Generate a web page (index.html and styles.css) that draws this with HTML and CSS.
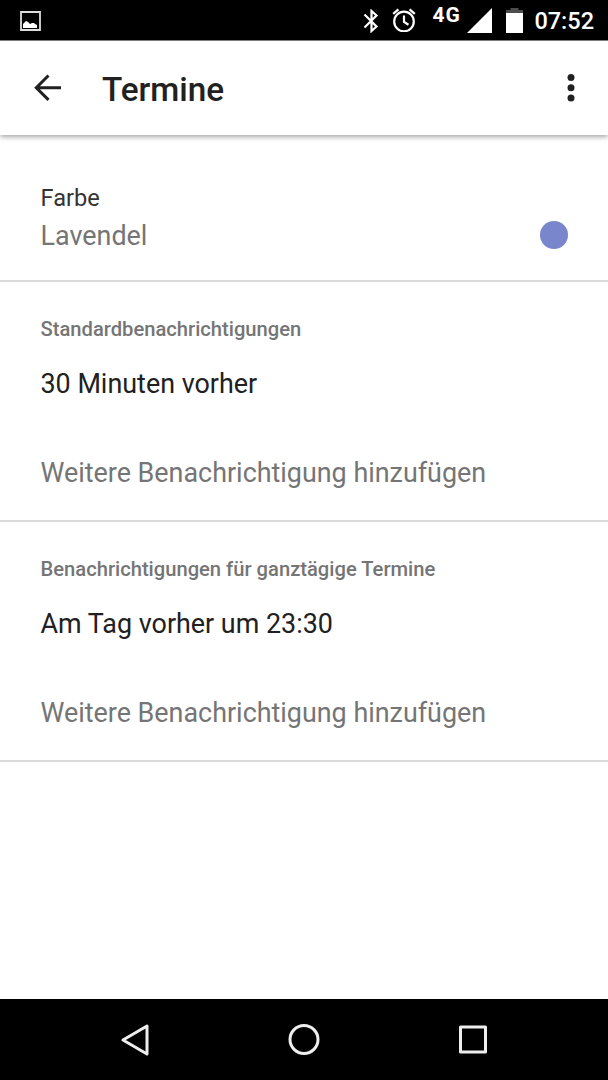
FILE: index.html
```html
<!DOCTYPE html>
<html lang="de">
<head>
<meta charset="utf-8">
<title>Termine</title>
<link rel="stylesheet" href="styles.css">
</head>
<body>
<div class="screen">
  <header class="status">
    <svg class="picture" width="21" height="20" viewBox="0 0 21 20"><path d="M1 1h19v18H1z" fill="none" stroke="#ddd" stroke-width="1.800"/><path d="M3 17v-4l2-2 1-1 2 1 2 2 2-1 2 0 1 1 2 1v3z" fill="#fff"/></svg>
    <svg class="bluetooth" width="16" height="24" viewBox="0 0 16 24"><path d="M1.500 5.500L13.500 17.500 8.500 22V2l5 4.500L1.500 18.500" fill="none" stroke="#fff" stroke-width="2.200"/></svg>
    <svg class="alarm" width="24" height="24" viewBox="0 0 24 24" fill="none" stroke="#fff" stroke-width="2.200"><circle cx="12" cy="13.500" r="9.800"/><path d="M12 7.500v6.500l4.500 2.700M1.200 5.800L6.400 1.400M22.800 5.800l-5.200-4.400"/></svg>
    <span class="network">4G</span>
    <svg class="signal" width="25" height="25" viewBox="0 0 25 25"><path d="M0 25L25 0v25z" fill="#fff"/></svg>
    <svg class="battery" width="17" height="25" viewBox="0 0 17 25"><path d="M4.500 0h8v2H17v4H0V2h4.500z" fill="#4d4d4d"/><path d="M0 5h17v20H0z" fill="#fff"/></svg>
    <span class="time">07:52</span>
  </header>
  <div class="appbar">
    <svg class="back" width="28" height="28" viewBox="0 0 28 28"><path d="M27 13.700H2.500M14.500 1.500L2.300 13.700l12.200 12.200" fill="none" stroke="#212121" stroke-width="3"/></svg>
    <h1 class="title">Termine</h1>
    <svg class="more" width="8" height="28" viewBox="0 0 8 28" fill="#212121"><circle cx="4" cy="3.500" r="3.500"/><circle cx="4" cy="13.700" r="3.500"/><circle cx="4" cy="23.900" r="3.500"/></svg>
  </div>
  <main class="content">
    <section class="color-section">
      <div class="label">Farbe</div>
      <div class="color-row"><span class="muted">Lavendel</span><span class="swatch"></span></div>
    </section>
    <section class="group">
      <h2 class="heading">Standardbenachrichtigungen</h2>
      <div class="item">30 Minuten vorher</div>
      <div class="item muted">Weitere Benachrichtigung hinzufügen</div>
    </section>
    <section class="group">
      <h2 class="heading">Benachrichtigungen für ganztägige Termine</h2>
      <div class="item">Am Tag vorher um 23:30</div>
      <div class="item muted">Weitere Benachrichtigung hinzufügen</div>
    </section>
  </main>
  <nav class="navbar">
    <svg width="34" height="34" viewBox="0 0 34 34"><path d="M29 3v28L5 17z"/></svg>
    <svg width="34" height="34" viewBox="0 0 34 34"><circle cx="17" cy="16.500" r="14"/></svg>
    <svg width="34" height="34" viewBox="0 0 34 34"><path d="M4.500 4h25v25h-25z"/></svg>
  </nav>
</div>
</body>
</html>
```
FILE: styles.css
```css
* { box-sizing: border-box; }
body { margin: 0; font-family: Roboto, sans-serif; background: #fff; color: #212121; }
.screen { width: 608px; height: 1080px; display: flex; flex-direction: column; overflow: hidden; }
svg { display: block; flex: none; }
.status { height: 41px; flex: none; background: #000; border-bottom: 1px solid #858585; color: #fff; display: flex; align-items: center; padding: 1px 14px 0 20px; }
.picture { margin-right: auto; }
.alarm { margin-left: 13px; margin-top: -1px; }
.network { width: 29px; margin: -11px 6px 0 16px; font-size: 21px; line-height: 24px; font-weight: 700; letter-spacing: 1px; }
.battery { margin: 0 11px 0 14px; }
.time { font-size: 23.500px; line-height: 28px; font-weight: 500; }
.appbar { height: 94px; flex: none; display: flex; align-items: center; padding: 0 33px 0 34px; box-shadow: 0 2px 5px rgba(0,0,0,.35); }
.title { margin: 3px auto 0 40px; font-size: 33.300px; line-height: 40px; font-weight: 500; }
.content { flex: 1; }
.color-section { height: 147px; padding: 48px 40px 0 40.500px; border-bottom: 2px solid #dadada; }
.label { font-size: 23.600px; line-height: 30px; color: #333; }
.color-row { display: flex; justify-content: space-between; align-items: center; height: 46px; font-size: 26.900px; }
.swatch { width: 28px; height: 28px; margin-top: -2px; border-radius: 50%; background: #7986cb; }
.muted { color: #757575; }
.group { height: 240px; padding: 32px 40px 0 40.500px; border-bottom: 2px solid #dadada; }
.heading { margin: 0; font-size: 20.180px; line-height: 30px; font-weight: 500; color: #757575; }
.item { font-size: 26.900px; line-height: 36px; margin-top: 22px; }
.item.muted { margin-top: 53px; }
.navbar { height: 81px; flex: none; background: #000; display: flex; justify-content: center; align-items: center; gap: 135px; fill: none; stroke: #eee; stroke-width: 3; stroke-linejoin: round; }
```
